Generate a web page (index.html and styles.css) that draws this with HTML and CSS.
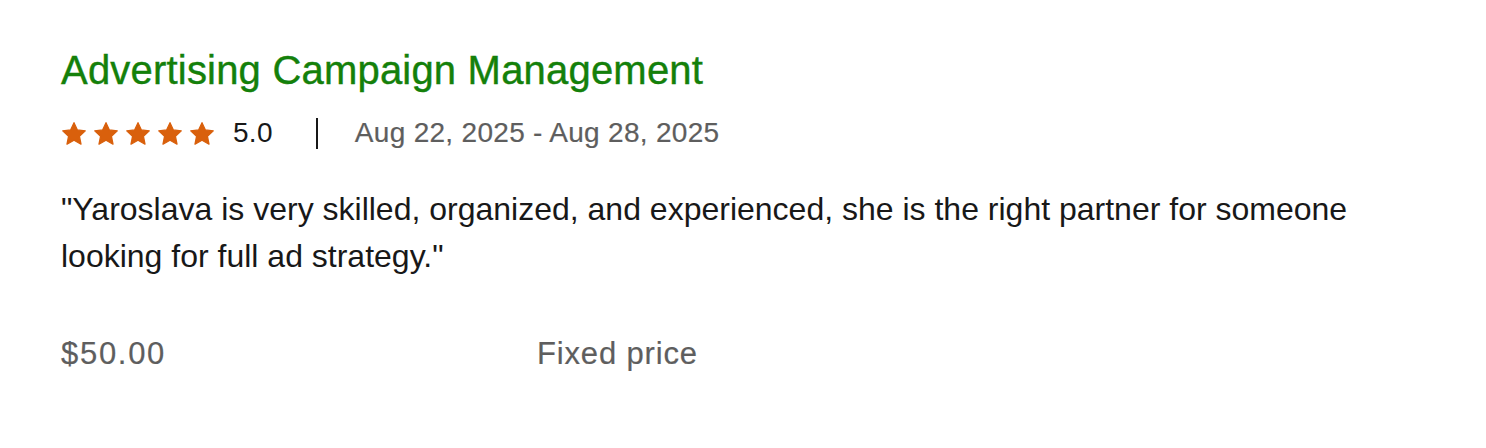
FILE: index.html
```html
<!DOCTYPE html>
<html>
<head>
<meta charset="utf-8">
<link rel="stylesheet" href="styles.css">
</head>
<body>
<div class="review">
  <h2 class="title">Advertising Campaign Management</h2>
  <div class="meta">
    <div class="stars">
      <svg class="star" viewBox="1.6 1.6 20.8 20"><path d="M12 2.2l2.95 6.3 6.85.8-5.05 4.75 1.35 6.85L12 17.5l-6.1 3.4 1.35-6.85L2.2 9.3l6.85-.8z"/></svg>
      <svg class="star" viewBox="1.6 1.6 20.8 20"><path d="M12 2.2l2.95 6.3 6.85.8-5.05 4.75 1.35 6.85L12 17.5l-6.1 3.4 1.35-6.85L2.2 9.3l6.85-.8z"/></svg>
      <svg class="star" viewBox="1.6 1.6 20.8 20"><path d="M12 2.2l2.95 6.3 6.85.8-5.05 4.75 1.35 6.85L12 17.5l-6.1 3.4 1.35-6.85L2.2 9.3l6.85-.8z"/></svg>
      <svg class="star" viewBox="1.6 1.6 20.8 20"><path d="M12 2.2l2.95 6.3 6.85.8-5.05 4.75 1.35 6.85L12 17.5l-6.1 3.4 1.35-6.85L2.2 9.3l6.85-.8z"/></svg>
      <svg class="star" viewBox="1.6 1.6 20.8 20"><path d="M12 2.2l2.95 6.3 6.85.8-5.05 4.75 1.35 6.85L12 17.5l-6.1 3.4 1.35-6.85L2.2 9.3l6.85-.8z"/></svg>
    </div>
    <span class="score">5.0</span>
    <span class="divider"></span>
    <span class="dates">Aug 22, 2025 - Aug 28, 2025</span>
  </div>
  <p class="comment">"Yaroslava is very skilled, organized, and experienced, she is the right partner for someone looking for full ad strategy."</p>
  <div class="footer">
    <span class="price">$50.00</span>
    <span class="type">Fixed price</span>
  </div>
</div>
</body>
</html>
```
FILE: styles.css
```css
html, body {
  margin: 0;
  padding: 0;
  background: #ffffff;
}
body {
  font-family: "Liberation Sans", Arial, sans-serif;
  color: #181818;
}
.review {
  padding: 46px 61px 0 61px;
}
.title {
  margin: 0;
  font-size: 40px;
  font-weight: 400;
  color: #14800a;
  line-height: 48px;
  letter-spacing: 0.2px;
  -webkit-text-stroke: 0.4px #14800a;
}
.meta {
  display: flex;
  align-items: center;
  margin-top: 23px;
  height: 32px;
}
.stars {
  display: flex;
  gap: 8px;
  padding-left: 1px;
}
.star {
  display: block;
  width: 24px;
  height: 23px;
  fill: #d9600c;
  stroke: #d9600c;
  stroke-width: 1.1;
  stroke-linejoin: round;
}
.score {
  margin-left: 19px;
  font-size: 28px;
  letter-spacing: 0.3px;
  line-height: 32px;
}
.divider {
  width: 2px;
  height: 31px;
  background: #181818;
  margin: 0 37px 0 43px;
}
.dates {
  font-size: 28px;
  letter-spacing: 0.3px;
  line-height: 32px;
  color: #5e5e5e;
  -webkit-text-stroke: 0.2px #5e5e5e;
}
.comment {
  margin: 37px 0 0 0;
  font-size: 32px;
  line-height: 47px;
  width: 1300px;
}
.footer {
  display: flex;
  margin-top: 54px;
  font-size: 31px;
  line-height: 40px;
  color: #5e5e5e;
  -webkit-text-stroke: 0.2px #5e5e5e;
}
.price {
  width: 476px;
  letter-spacing: 1.7px;
}
.type {
  letter-spacing: 0.85px;
}
```
